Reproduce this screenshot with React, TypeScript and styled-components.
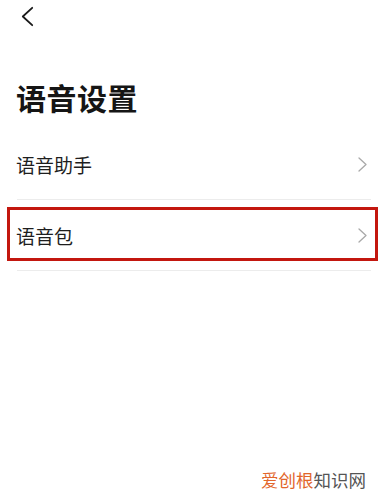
import styled, { createGlobalStyle } from 'styled-components';

const GlobalStyle = createGlobalStyle`
  html, body {
    margin: 0;
    padding: 0;
    background: #ffffff;
  }
  body {
    font-family: 'Noto Sans CJK SC', 'Noto Sans', sans-serif;
    color: #1b1b1b;
  }
`;

const Page = styled.div`
  position: relative;
  width: 390px;
  height: 495px;
  overflow: hidden;
  background: #ffffff;
`;

const TopBar = styled.div`
  height: 34px;
  display: flex;
  align-items: center;
  padding-left: 21px;
`;

const BackButton = styled.button`
  border: 0;
  background: none;
  padding: 0;
  display: flex;
  width: 14px;
  height: 22px;
  cursor: pointer;
`;

const Title = styled.h1`
  margin: 30px 0 0 16px;
  height: 65px;
  display: flex;
  align-items: center;
  font-size: 30px;
  font-weight: 700;
  line-height: 1;
  letter-spacing: 0.5px;
  color: #151515;
`;

const List = styled.ul`
  list-style: none;
  margin: 0 19px 0 17px;
  padding: 0;
`;

const Row = styled.li`
  position: relative;
  height: 70px;
  display: flex;
  align-items: center;
  justify-content: space-between;
  border-bottom: 1px solid #ececec;
`;

const Label = styled.span`
  font-size: 19px;
  line-height: 1;
  margin-left: -1px;
  color: #1e1e1e;
  margin-top: ${(p: { $nudge?: number }) => p.$nudge ?? 0}px;
`;

const Highlight = styled.div`
  position: absolute;
  left: -10px;
  right: -7px;
  top: 7px;
  bottom: 9px;
  border: 3px solid #c3170f;
  pointer-events: none;
`;

const Watermark = styled.div`
  position: absolute;
  right: 24px;
  bottom: 7px;
  font-size: 17.5px;
  line-height: 1;
  letter-spacing: 0;
  color: #555555;
`;

const Accent = styled.span`
  color: #e2662b;
`;

const Chevron = ({ color, width, height, stroke }: { color: string; width: number; height: number; stroke: number }) => (
  <svg width={width} height={height} viewBox={`0 0 ${width} ${height}`} fill="none">
    <path
      d={`M${width - stroke} ${stroke} L${stroke} ${height / 2} L${width - stroke} ${height - stroke}`}
      stroke={color}
      strokeWidth={stroke}
      strokeLinecap="round"
      strokeLinejoin="round"
    />
  </svg>
);

const Forward = () => (
  <svg width="9" height="15" viewBox="0 0 9 15" fill="none" style={{ marginRight: 4 }}>
    <path d="M1 1 L8 7.5 L1 14" stroke="#a9a9a9" strokeWidth="1.3" strokeLinecap="round" strokeLinejoin="round" />
  </svg>
);

const items = [
  { id: 'assistant', label: '语音助手', selected: false },
  { id: 'pack', label: '语音包', selected: true },
];

const App = () => {
  return (
    <>
      <GlobalStyle />
      <Page>
        <TopBar>
          <BackButton aria-label="返回">
            <Chevron color="#1a1a1a" width={13} height={21} stroke={1.8} />
          </BackButton>
        </TopBar>
        <Title>语音设置</Title>
        <List>
          {items.map((item) => (
            <Row key={item.id}>
              <Label>{item.label}</Label>
              <Forward />
              {item.selected && <Highlight />}
            </Row>
          ))}
        </List>
        <Watermark>
          <Accent>爱创根</Accent>知识网
        </Watermark>
      </Page>
    </>
  );
};

export default App;
